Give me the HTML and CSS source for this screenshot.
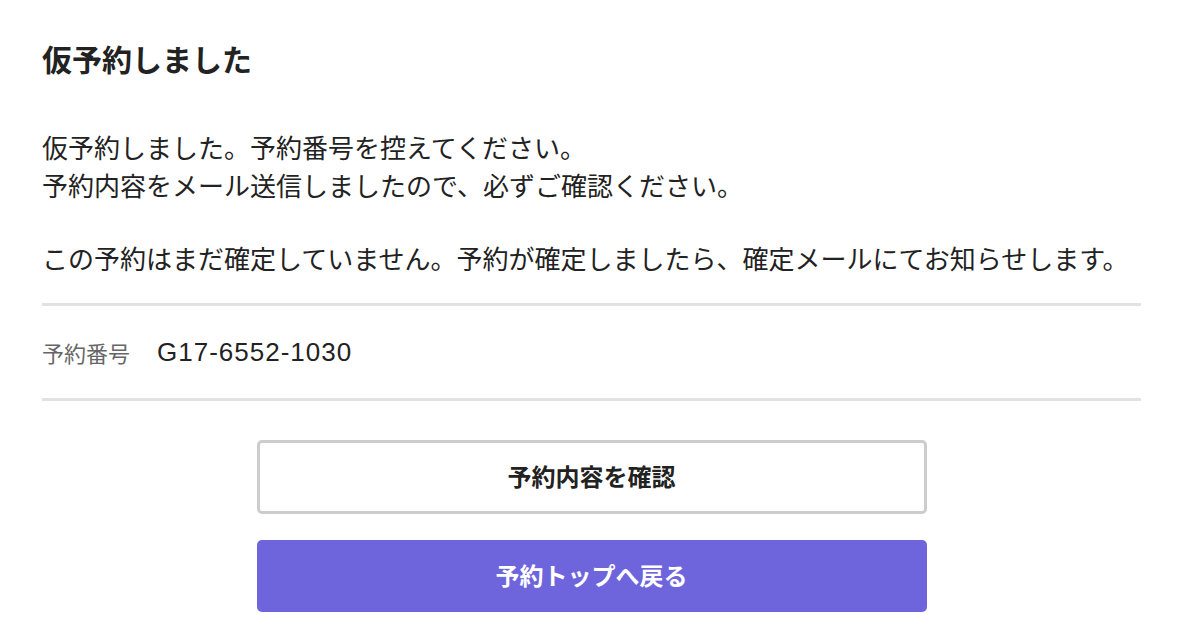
FILE: index.html
```html
<!DOCTYPE html>
<html lang="ja">
<head>
  <meta charset="UTF-8" />
  <meta name="viewport" content="width=device-width, initial-scale=1.0"/>
  <title>仮予約しました</title>
  <link rel="stylesheet" href="styles.css">
</head>
<body>

  <div class="page">
    <h1 class="title">仮予約しました</h1>

    <p class="message">
      仮予約しました。予約番号を控えてください。<br>
      予約内容をメール送信しましたので、必ずご確認ください。
    </p>
    <p class="message notice">この予約はまだ確定していません。予約が確定しましたら、確定メールにてお知らせします。</p>

    <div class="reserve-number">
      <span class="label">予約番号</span>
      <span class="value">G17-6552-1030</span>
    </div>

    <div class="actions">
      <a href="#" class="btn btn-outline">予約内容を確認</a>
      <a href="#" class="btn btn-primary">予約トップへ戻る</a>
    </div>
  </div>

</body>
</html>
```

FILE: styles.css
```css
body {
  margin: 0;
  font-family: "Noto Sans CJK JP", "Noto Sans", sans-serif;
  background: #fff;
  color: #222;
}

.page {
  padding: 38px 45px 0 42px;
}

.title {
  margin: 0;
  font-size: 30px;
  line-height: 40px;
  font-weight: bold;
}

.message {
  margin: 50px 0 0;
  font-size: 26px;
  line-height: 38px;
}

.message.notice {
  margin-top: 35px;
}

.reserve-number {
  display: flex;
  align-items: center;
  gap: 27px;
  margin-top: 26px;
  height: 92px;
  border-top: 3px solid #e2e2e2;
  border-bottom: 3px solid #e2e2e2;
}

.reserve-number .label {
  font-size: 22px;
  color: #666;
}

.reserve-number .value {
  font-family: "Liberation Sans", "Noto Sans CJK JP", sans-serif;
  font-size: 26px;
  letter-spacing: 1px;
  color: #222;
}

.actions {
  display: flex;
  flex-direction: column;
  align-items: center;
  gap: 26px;
  margin-top: 39px;
}

.btn {
  box-sizing: border-box;
  display: flex;
  align-items: center;
  justify-content: center;
  width: 670px;
  padding-bottom: 3px;
  font-size: 24px;
  font-weight: bold;
  text-decoration: none;
  border-radius: 5px;
}

.btn-outline {
  height: 74px;
  background: #fff;
  color: #222;
  border: 3px solid #ccc;
}

.btn-primary {
  height: 72px;
  background: #6e65dd;
  color: #fff;
}
```
